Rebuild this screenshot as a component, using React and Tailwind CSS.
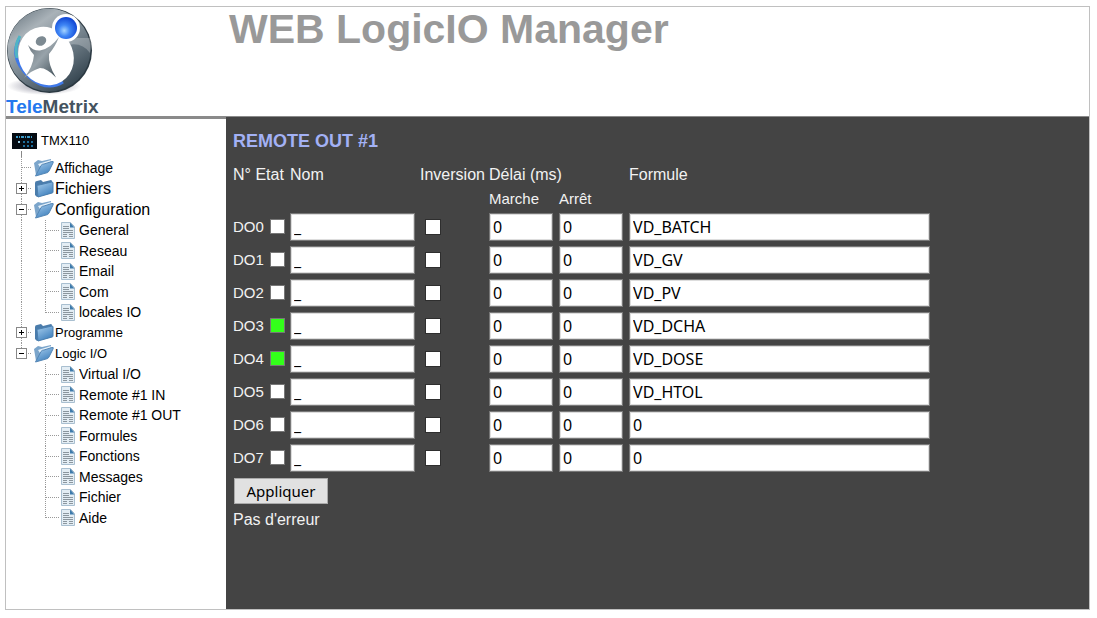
import { useState } from "react";

const tree = [
  { label: "Affichage", size: "text-sm", icon: "open" },
  { label: "Fichiers", size: "text-base", icon: "closed", items: [] },
  {
    label: "Configuration",
    size: "text-base",
    icon: "open",
    items: ["General", "Reseau", "Email", "Com", "locales IO"],
  },
  { label: "Programme", size: "text-[13px]", icon: "closed", items: [] },
  {
    label: "Logic I/O",
    size: "text-[13px]",
    icon: "open",
    items: [
      "Virtual I/O",
      "Remote #1 IN",
      "Remote #1 OUT",
      "Formules",
      "Fonctions",
      "Messages",
      "Fichier",
      "Aide",
    ],
  },
];

const outputs = [
  { id: "DO0", on: false, formule: "VD_BATCH" },
  { id: "DO1", on: false, formule: "VD_GV" },
  { id: "DO2", on: false, formule: "VD_PV" },
  { id: "DO3", on: true, formule: "VD_DCHA" },
  { id: "DO4", on: true, formule: "VD_DOSE" },
  { id: "DO5", on: false, formule: "VD_HTOL" },
  { id: "DO6", on: false, formule: "0" },
  { id: "DO7", on: false, formule: "0" },
];

const Logo = () => (
  <svg width="94" height="90" viewBox="0 0 94 90" aria-hidden="true">
    <defs>
      <linearGradient id="ring" x1="0" y1="0" x2="0.7" y2="1">
        <stop offset="0" stopColor="#5d6b75" />
        <stop offset="0.3" stopColor="#a9b2b8" />
        <stop offset="0.6" stopColor="#77858f" />
        <stop offset="1" stopColor="#34444f" />
      </linearGradient>
      <linearGradient id="man" x1="0" y1="0" x2="1" y2="1">
        <stop offset="0" stopColor="#59656d" />
        <stop offset="0.5" stopColor="#98a3aa" />
        <stop offset="1" stopColor="#36454e" />
      </linearGradient>
      <radialGradient id="ball" cx="0.42" cy="0.62" r="0.65">
        <stop offset="0" stopColor="#a5d4ff" />
        <stop offset="0.4" stopColor="#3f86f5" />
        <stop offset="1" stopColor="#0b3fd0" />
      </radialGradient>
      <radialGradient id="shade">
        <stop offset="0" stopColor="#8c8c9c" />
        <stop offset="1" stopColor="#ffffff" />
      </radialGradient>
    </defs>
    <ellipse cx="38" cy="79" rx="37" ry="9" fill="url(#shade)" />
    <circle cx="43.5" cy="43.5" r="42.5" fill="#2b3942" />
    <circle cx="43" cy="43" r="41.5" fill="url(#ring)" />
    <path d="M57 36 L71 31 L84 31 Q86 35 84 46 Q76 35 62 38Z" fill="#fff" opacity="0.25" />
    <path
      d="M13 32 Q6 46 14 59 Q22 72 34 77 Q46 82 57 75"
      fill="none"
      stroke="#3f78e8"
      strokeWidth="3"
    />
    <path d="M14 29 Q8 39 11 51" fill="none" stroke="#4fb4c4" strokeWidth="3" />
    <ellipse cx="40" cy="49" rx="27" ry="30" transform="rotate(-32 40 49)" fill="#fff" />
    <circle cx="60" cy="21" r="14" fill="#fff" />
    <circle cx="60" cy="21" r="11" fill="url(#ball)" />
    <ellipse cx="35" cy="34" rx="5.5" ry="4.5" transform="rotate(-30 35 34)" fill="#7d8a92" />
    <path
      d="M22 38 Q27 44 34 43.5 Q44 42 53 30 Q49 40 43 47 Q42 58 50 70.5 Q41 61 34 61 Q26 63 18 71 Q27 60 28 48 Q24 44 22 38Z"
      fill="url(#man)"
    />
  </svg>
);

const Keypad = () => (
  <svg width="25" height="16" viewBox="0 0 25 16" aria-hidden="true" className="shrink-0">
    <rect width="25" height="16" fill="#050b12" />
    <path d="M4 4h2m1 0h1m1 0h3m1 0h1m1 0h3m1 0h1" stroke="#3b9ccb" strokeWidth="2" />
    <path d="M11 9h2m2 0h2m2 0h2M11 13h2m2 0h2m2 0h2" stroke="#1e6e9c" strokeWidth="2" />
    <path d="M6 9h2" stroke="#9fd0e6" strokeWidth="2" />
  </svg>
);

const Folder = ({ open }) => (
  <svg width="20" height="19" viewBox="0 0 20 19" aria-hidden="true" className="shrink-0">
    <defs>
      <linearGradient id="folder" x1="0" y1="0" x2="0.6" y2="1">
        <stop offset="0" stopColor="#a9cfee" />
        <stop offset="1" stopColor="#3f80bd" />
      </linearGradient>
    </defs>
    {open ? (
      <>
        <path d="M0 5 L4 2 L8 3 L17 1 V9 L2 17Z" fill="#7ba5cb" />
        <path d="M4 6 L17 2 L16 7 L6 9Z" fill="#e4f0f9" />
        <path
          d="M1.5 18 L7 7.5 Q8 6 10 6 L18 3.5 Q20 3 19 5 L15 13 Q14 15 12 15Z"
          fill="url(#folder)"
          stroke="#5486b5"
        />
      </>
    ) : (
      <>
        <path d="M1 4 Q1 2 3 2 L7 1 L9 3 L17 1 Q18 1 18 3 V14 L3 18 L1 16Z" fill="#4a7cab" />
        <path
          d="M3 7 Q3 6 5 6 L18 3 Q19 3 19 4 V13 Q19 14 18 14 L4 18Z"
          fill="url(#folder)"
          stroke="#4a7fb0"
        />
      </>
    )}
  </svg>
);

const Page = () => (
  <svg width="14" height="17" viewBox="0 0 14 17" aria-hidden="true" className="shrink-0">
    <path d="M0.5 0.5h9l4 4v12h-13z" fill="#e3edf4" stroke="#a9bfd0" />
    <path d="M9 0.5 L13.5 5.5 H9Z" fill="#3d7aab" />
    <path d="M2 4.5h6M2 6.5h6M2 8.5h10M2 10.5h10M2 12.5h4m2 0h4M2 14.5h4m2 0h4" stroke="#8b969e" />
  </svg>
);

const dots = { stroke: "#999", strokeDasharray: "1 1" };

// vertical guide, horizontal arm and the optional +/- box of one tree row
const Branch = ({ width, height, arm, last, box }) => {
  const mid = Math.floor(height / 2);
  return (
    <svg width={width} height={height} aria-hidden="true" className="shrink-0">
      <path d={`M6.5 0V${last ? mid + 1 : height}`} {...dots} />
      {arm && <path d={`M7 ${mid}.5H${width - 2}`} {...dots} />}
      {box && (
        <>
          <rect x="1.5" y={mid - 4.5} width="10" height="10" fill="#fff" stroke="#888" />
          <path
            d={box === "+" ? `M4 ${mid}.5h5M6.5 ${mid - 2}v5` : `M4 ${mid}.5h5`}
            stroke="#000"
          />
        </>
      )}
    </svg>
  );
};

const TreeFolder = ({ node, last }) => {
  const [open, setOpen] = useState(node.icon === "open");
  const items = node.items;
  const branch = (
    <Branch
      width={19}
      height={21}
      arm
      last={last}
      box={items ? (open ? "-" : "+") : null}
    />
  );

  return (
    <li>
      <div className="flex h-[21px] items-center">
        {items ? (
          <button
            type="button"
            aria-expanded={open}
            aria-label={node.label}
            onClick={() => setOpen(!open)}
          >
            {branch}
          </button>
        ) : (
          branch
        )}
        <Folder open={open} />
        <a href="#" className={`${node.size} pl-px leading-5`}>
          {node.label}
        </a>
      </div>
      {open && items && (
        <ul>
          {items.map((item, i) => {
            const height = i % 2 ? 21 : 20;
            return (
              <li key={item} className="flex items-center">
                {last ? (
                  <span className="w-6 shrink-0" />
                ) : (
                  <Branch width={24} height={height} />
                )}
                <Branch width={22} height={height} arm last={i === items.length - 1} />
                <Page />
                <a href="#" className="pl-1 text-sm leading-5 whitespace-nowrap">
                  {item}
                </a>
              </li>
            );
          })}
        </ul>
      )}
    </li>
  );
};

const Sidebar = () => (
  <nav className="w-55 shrink-0 border-t-2 border-[#8a8a8a] bg-white pt-3 text-black">
    <div className="flex items-center gap-1 pl-1.5">
      <Keypad />
      <a href="#" className="text-[13px] leading-5">
        TMX110
      </a>
    </div>
    <div className="h-1.5 pl-[15px]">
      <div className="h-full w-px bg-[#888]" />
    </div>
    <ul className="pl-[9px]">
      {tree.map((node, i) => (
        <TreeFolder key={node.label} node={node} last={i === tree.length - 1} />
      ))}
    </ul>
  </nav>
);

const Field = ({ label, value, className }) => (
  <input
    type="text"
    aria-label={label}
    defaultValue={value}
    className={`${className} block h-7 border border-[#777] bg-white pl-[3px] font-['Noto_Sans',sans-serif] text-base leading-6 text-black inset-shadow-[0_0_0_1px_#ddd]`}
  />
);

const Outputs = () => (
  <table className="mt-2.5 w-[697px] table-fixed border-collapse text-left">
    <colgroup>
      <col className="w-[37px]" />
      <col className="w-5" />
      <col className="w-[130px]" />
      <col className="w-[69px]" />
      <col className="w-[70px]" />
      <col className="w-[70px]" />
      <col className="w-[301px]" />
    </colgroup>
    <thead className="whitespace-nowrap">
      <tr className="h-6">
        <th colSpan={2} className="p-0 font-normal">N° Etat</th>
        <th className="p-0 font-normal">Nom</th>
        <th className="p-0 font-normal">Inversion</th>
        <th colSpan={2} className="p-0 font-normal">Délai (ms)</th>
        <th className="p-0 font-normal">Formule</th>
      </tr>
      <tr className="text-[15px] leading-[23px]">
        <td colSpan={4} className="p-0" />
        <th className="p-0 font-normal">Marche</th>
        <th className="p-0 font-normal">Arrêt</th>
        <td className="p-0" />
      </tr>
    </thead>
    <tbody>
      {outputs.map((out) => (
        <tr key={out.id} className="h-[33px]">
          <th className="p-0 text-[15px] font-normal">{out.id}</th>
          <td className="p-0">
            <div
              role="img"
              aria-label={out.on ? "Marche" : "Arrêt"}
              className={`size-[15px] border border-[#777] ${out.on ? "bg-[#33ff1a]" : "bg-white"}`}
            />
          </td>
          <td className="p-0">
            <Field label={`${out.id} nom`} value="_" className="w-[125px]" />
          </td>
          <td className="p-0 pl-[5px]">
            <input
              type="checkbox"
              aria-label={`${out.id} inversion`}
              className="block size-4 appearance-none border border-[#2e2e2e] bg-white checked:bg-[#888]"
            />
          </td>
          <td className="p-0">
            <Field label={`${out.id} marche`} value="0" className="w-16" />
          </td>
          <td className="p-0">
            <Field label={`${out.id} arrêt`} value="0" className="w-16" />
          </td>
          <td className="p-0">
            <Field label={`${out.id} formule`} value={out.formule} className="w-full" />
          </td>
        </tr>
      ))}
    </tbody>
  </table>
);

const App = () => {
  return (
    <div className="flex min-h-screen bg-white pt-1.5 pr-[7px] pb-2 pl-[5px] font-['Liberation_Sans',Arial,sans-serif]">
      <div className="flex grow flex-col border border-[#c0c0c0]">
        <header className="flex h-[110px] border-b border-[#8a8a8a]">
          <div className="w-[223px] shrink-0">
            <Logo />
            <div className="text-[19px] leading-5 font-bold text-[#44535f]">
              <span className="text-[#2478ee]">Tele</span>Metrix
            </div>
          </div>
          <h1 className="text-[41px] leading-11 font-bold whitespace-nowrap text-[#999]">
            WEB LogicIO Manager
          </h1>
        </header>
        <div className="flex grow bg-[#444]">
          <Sidebar />
          <main className="grow pt-3 pl-[7px] text-base leading-6 text-[#f2f2f2]">
            <h2 className="text-lg leading-6 font-bold text-[#a3b1f5]">REMOTE OUT #1</h2>
            <form onSubmit={(e) => e.preventDefault()}>
              <Outputs />
              <button
                type="submit"
                className="mt-1 ml-px block h-[26px] w-[94px] border border-[#aaa] bg-[#e1e1e1] font-['Noto_Sans',sans-serif] text-[15px] leading-6 text-black"
              >
                Appliquer
              </button>
            </form>
            <p className="mt-1 leading-6">Pas d'erreur</p>
          </main>
        </div>
      </div>
    </div>
  );
};

export default App;
